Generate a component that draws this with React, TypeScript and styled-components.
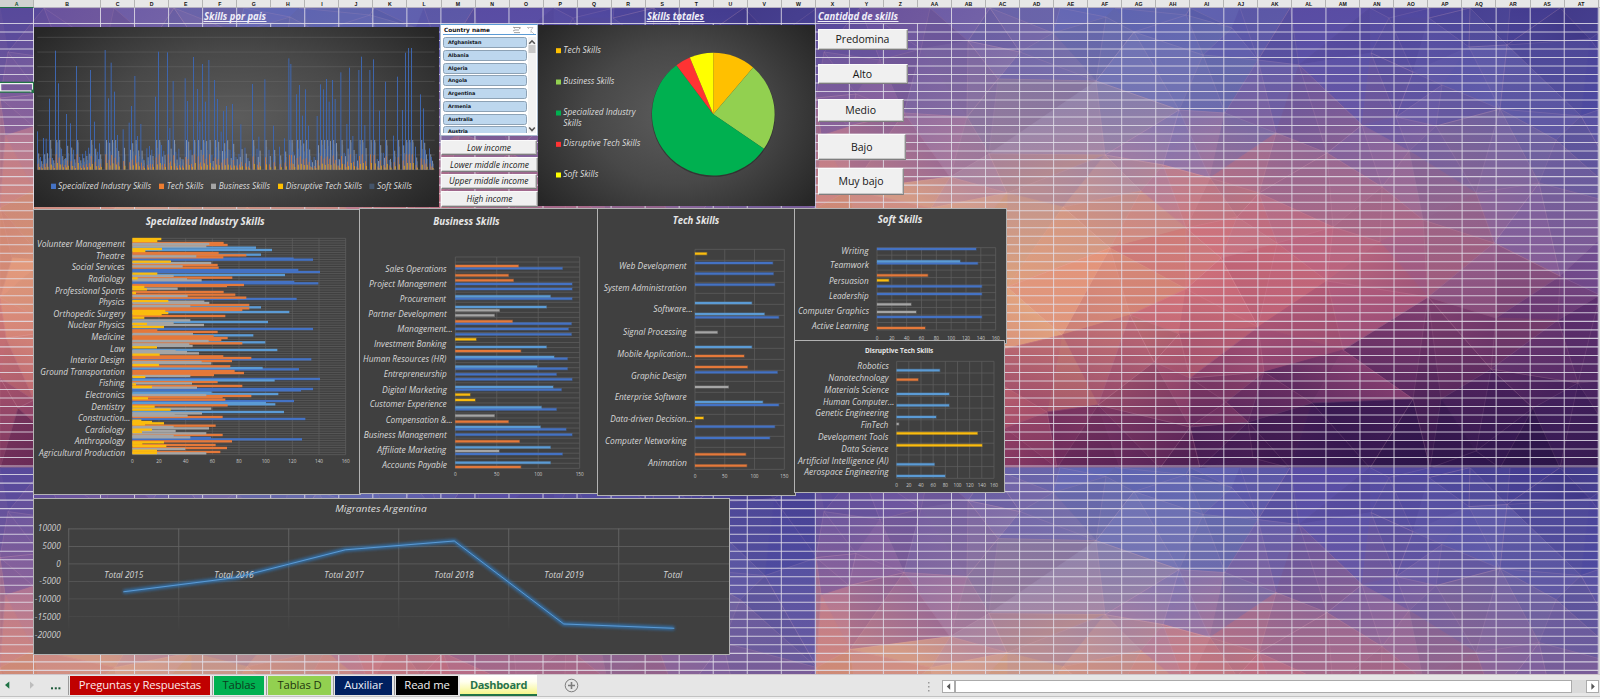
import React from "react";
import styled, { createGlobalStyle, css } from "styled-components";

const GlobalStyle = createGlobalStyle`
  * { box-sizing: border-box; }
  html, body { margin: 0; padding: 0; }
  body { font-family: "Open Sans", "Noto Sans", sans-serif; overflow: hidden; }
`;

/* ---------- sheet metrics ---------- */

const W = 1600;
const H = 699;
const SHEET_H = 666;
const COL = 34.04;
const ROW = 8.513;
const FIRST_ROW = 15.4;
const TILE_W = 816;
const TILE_H = 459.6;

const COLUMN_NAMES = "A B C D E F G H I J K L M N O P Q R S T U V W X Y Z AA AB AC AD AE AF AG AH AI AJ AK AL AM AN AO AP AQ AR AS AT".split(" ");

/* ---------- low-poly wallpaper ---------- */

type Pt = [number, number];

const MESH: Pt[] = [
  [0, 0], [44, 0], [114, 0], [174, 0], [244, 0], [299, 0], [374, 0], [424, 0], [474, 0], [554, 0], [614, 0], [654, 0], [694, 0], [744, 0], [817, 0],
  [8, 44], [5, 127], [33, 118], [40, 86], [64, 52],
  [105, 41], [152, 33], [204, 44], [237, 25], [290, 9], [318, 24], [370, 7], [387, 47], [416, 20], [442, 52], [483, 57], [555, 45],
  [573, 10], [613, 10], [597, 64], [653, 39], [691, 37], [774, 31], [626, 77], [182, 71], [280, 73], [363, 102], [409, 105],
  [460, 125], [546, 117], [580, 109], [620, 118], [684, 101], [765, 108], [740, 132], [88, 105], [151, 109], [134, 169], [173, 146],
  [289, 147], [347, 157], [511, 145], [593, 143], [394, 170], [443, 185], [566, 179], [660, 185], [723, 175], [115, 200], [191, 185],
  [247, 199], [325, 183], [370, 220], [421, 209], [517, 219], [607, 212], [564, 234], [461, 235], [678, 235], [294, 240], [405, 250],
  [744, 268], [784, 287], [370, 281], [511, 273], [612, 289], [680, 310], [742, 312], [314, 307], [191, 279], [246, 327], [363, 326],
  [442, 319], [527, 342], [338, 354], [374, 370], [448, 364], [675, 361], [762, 375], [231, 404], [282, 397], [410, 394], [496, 395],
  [597, 391], [625, 391], [717, 400], [432, 414], [374, 419], [660, 443], [437, 450], [189, 420],
  [34, 182], [44, 252], [124, 262], [64, 322], [144, 352], [34, 392], [114, 422], [12, 250], [6, 330], [18, 400],
  [0, 90], [0, 200], [0, 290], [0, 370], [817, 90], [817, 200], [817, 290], [817, 370],
  [0, 460], [84, 460], [144, 460], [241, 460], [304, 460], [344, 460], [384, 460], [474, 460], [554, 460], [614, 460], [684, 460], [744, 460], [817, 460],
];

const SHADE_X = [0, 84, 184, 284, 384, 484, 584, 684, 784];
const SHADE_Y = [0, 52, 102, 152, 202, 252, 302, 352, 402, 460];
const SHADES = [
  "5a4ba0 68509c 6a62a8 5f66b2 5b5fae 57499e 50479d 453f93 3a2f7c",
  "6a56a0 725a9c 7a66a4 7272ae 6a70b2 5a50a4 5850a2 5c58a6 4b4598",
  "85609a 86609a 9080a4 8880ac 6f6eb0 70589e 6a58a4 6660a8 4c4a9e",
  "c07a84 a87094 a8829e a888a2 a0749a 98668e 8a6698 7a68a0 64589f",
  "d08678 d89c84 c8988e d09888 c47880 b06a84 a46a8c 8a6494 6a5a9e",
  "dc9478 e0a07c e2a67e e09078 d4747a c4647a b46480 94608e 7a5494",
  "d88878 dc9a7c e2a680 d88c78 c86a76 b85c78 8c4674 7a406f 5c3070",
  "b86070 c87870 d08074 b06070 a04e6c 8c4270 7a386a 5e2c64 552c68",
  "8c4068 9a4a68 a85068 803864 6a2c60 4a2058 401c55 3a1a54 42205c",
  "5a2050 6a2a58 7c2f5c 5a2256 421a50 34164c 2a1448 2a1448 30184c",
].map((row) => row.split(" ").map((h) => [0, 2, 4].map((i) => parseInt(h.slice(i, i + 2), 16))));

function locate(axis: number[], v: number): [number, number] {
  for (let i = 0; i < axis.length - 1; i++) {
    if (v <= axis[i + 1]) return [i, Math.max(0, (v - axis[i]) / (axis[i + 1] - axis[i]))];
  }
  return [axis.length - 2, 1];
}

function shadeAt(x: number, y: number, gain: number) {
  const [i, u] = locate(SHADE_X, x);
  const [j, v] = locate(SHADE_Y, y);
  const mix = [0, 1, 2].map((k) => {
    const top = SHADES[j][i][k] * (1 - u) + SHADES[j][i + 1][k] * u;
    const bottom = SHADES[j + 1][i][k] * (1 - u) + SHADES[j + 1][i + 1][k] * u;
    return Math.min(255, Math.round((top * (1 - v) + bottom * v) * gain));
  });
  return `rgb(${mix.join(",")})`;
}

/* Bowyer-Watson triangulation */
function triangulate(source: Pt[]) {
  const pts: Pt[] = [...source, [-4000, -3000], [5000, -3000], [400, 7000]];
  const n = source.length;
  const circle = (t: number[]) => {
    const [[ax, ay], [bx, by], [cx, cy]] = t.map((i) => pts[i]);
    const d = 2 * (ax * (by - cy) + bx * (cy - ay) + cx * (ay - by)) || 1e-9;
    const a = ax * ax + ay * ay, b = bx * bx + by * by, c = cx * cx + cy * cy;
    const ux = (a * (by - cy) + b * (cy - ay) + c * (ay - by)) / d;
    const uy = (a * (cx - bx) + b * (ax - cx) + c * (bx - ax)) / d;
    return { t, x: ux, y: uy, r: (ax - ux) ** 2 + (ay - uy) ** 2 };
  };
  let tris = [circle([n, n + 1, n + 2])];
  for (let p = 0; p < n; p++) {
    const [x, y] = pts[p];
    const edges = new Map<string, number[]>();
    tris = tris.filter((c) => {
      if ((c.x - x) ** 2 + (c.y - y) ** 2 >= c.r) return true;
      for (const [a, b] of [[c.t[0], c.t[1]], [c.t[1], c.t[2]], [c.t[2], c.t[0]]]) {
        const key = a < b ? `${a}-${b}` : `${b}-${a}`;
        if (edges.has(key)) edges.delete(key);
        else edges.set(key, [a, b]);
      }
      return false;
    });
    edges.forEach(([a, b]) => tris.push(circle([a, b, p])));
  }
  return tris.filter((c) => c.t.every((i) => i < n)).map((c) => c.t.map((i) => pts[i]));
}

/* each facet runs from the shade at its upper corner to the shade at its lower one */
const FACETS = triangulate(MESH).map((t, i) => {
  const cx = (t[0][0] + t[1][0] + t[2][0]) / 3;
  const cy = (t[0][1] + t[1][1] + t[2][1]) / 3;
  const r1 = ((i * 37) % 17) / 17 - 0.5;
  const r2 = ((i * 53) % 23) / 23 - 0.5;
  const sorted = [...t].sort((a, b) => a[1] - b[1]);
  const [hi, lo] = [sorted[0], sorted[2]];
  const gain = 1 + r1 * 0.06;
  const dx = r1 * 22;
  const dy = r2 * 26;
  const toward = (p: Pt): Pt => [cx + (p[0] - cx) * 0.55 + dx, cy + (p[1] - cy) * 0.55 + dy];
  const a = toward(hi);
  const b = toward(lo);
  return {
    d: `M${t.map((p) => p.join(" ")).join("L")}Z`,
    hi, lo,
    from: shadeAt(a[0], a[1], gain),
    to: shadeAt(b[0], b[1], gain),
  };
});

const Wallpaper = styled.svg`
  display: block;
  width: ${W}px;
  height: ${SHEET_H}px;
`;

const COL_LINES = [33.5, ...Array.from({ length: 45 }, (_, i) => 100.5 + i * COL)];
const ROW_LINES = Array.from({ length: 77 }, (_, i) => FIRST_ROW + i * ROW);
/* first-row borders covered by headings that run past their own cell */
const OVERFLOWED = [5, 18, 23, 24];

function SheetSurface() {
  return (
    <Wallpaper viewBox={`0 0 ${W} ${SHEET_H}`}>
      <defs>
        <clipPath id="tileClip"><rect width={TILE_W} height={TILE_H} /></clipPath>
        {FACETS.map((f, i) => (
          <linearGradient key={i} id={`f${i}`} gradientUnits="userSpaceOnUse" x1={f.hi[0]} y1={f.hi[1]} x2={f.lo[0]} y2={f.lo[1]}>
            <stop offset="0" stopColor={f.from} />
            <stop offset="1" stopColor={f.to} />
          </linearGradient>
        ))}
        <g id="tile" clipPath="url(#tileClip)">
          <rect width={TILE_W} height={TILE_H} fill="#8a608c" />
          {FACETS.map((f, i) => <path key={i} d={f.d} fill={`url(#f${i})`} stroke={`url(#f${i})`} strokeWidth={0.8} />)}
          {FACETS.map((f, i) => (i % 2 ? <path key={i} d={f.d} fill="none" stroke="#ffc8d0" strokeOpacity={0.13} strokeWidth={0.8} /> : null))}
        </g>
      </defs>
      {[0, TILE_W].map((x) => [0, TILE_H].map((y) => <use key={`${x}-${y}`} href="#tile" x={x} y={y} />))}
      <g stroke="#e2e0ea" strokeOpacity={0.84}>
        {ROW_LINES.map((y) => <line key={y} x1={0} x2={1598.5} y1={y} y2={y} strokeWidth={1.05} />)}
        {COL_LINES.map((x, i) => (
          <line key={x} x1={x} x2={x} y1={OVERFLOWED.includes(i - 1) ? FIRST_ROW : 0} y2={SHEET_H} strokeWidth={1} />
        ))}
      </g>
      <rect x={1598.7} width={2} height={SHEET_H} fill="#d8d8d8" />
      <rect x={0.6} y={75.6} width={32} height={7.4} fill="none" stroke="#f0f5f1" strokeWidth={1.3} />
      <path d="M0 74.3H33.6V82.5M0 84.2H30.5" fill="none" stroke="#217346" strokeWidth={1.3} />
      <rect x={31.4} y={81.6} width={3} height={3.4} fill="#217346" />
    </Wallpaper>
  );
}

/* ---------- page frame ---------- */

const Workbook = styled.div`
  width: ${W}px;
  height: ${H}px;
  display: flex;
  flex-direction: column;
  overflow: hidden;
  background: #e6e6e6;
`;

const ColumnHeader = styled.div`
  display: flex;
  height: 8px;
  flex: none;
  background: #e7e7e7;
  border-bottom: 1px solid #b5b0c0;
`;

const HeaderCell = styled.div<{ $w: number; $active?: boolean }>`
  width: ${(p) => p.$w}px;
  flex: none;
  height: 8px;
  border-right: 1px solid #b4b4b4;
  font: 700 5.2px/8px "Liberation Sans", sans-serif;
  text-align: center;
  color: #111;
  ${(p) => p.$active && css`
    background: #d0d2d0;
    color: #174f30;
    border-bottom: 1px solid #217346;
  `}
`;

const Sheet = styled.div`
  position: relative;
  height: ${SHEET_H}px;
  flex: none;
  overflow: hidden;
`;

/* objects floating over the cells; coordinates are page coordinates */
const Floating = styled.div<{ $x: number; $y: number; $w: number; $h: number }>`
  position: absolute;
  left: ${(p) => p.$x}px;
  top: ${(p) => p.$y - 8}px;
  width: ${(p) => p.$w}px;
  height: ${(p) => p.$h}px;
`;

const Drawing = styled.svg`
  display: block;
  width: 100%;
  height: 100%;
  overflow: hidden;
  font-family: "Open Sans", "Noto Sans", sans-serif;
`;

const Panel = styled(Floating)`
  background: #404040;
  outline: 1px solid #b3b3b3;
  outline-offset: -0.5px;
`;

const GlowPanel = styled(Floating)`
  background: radial-gradient(ellipse 62% 75% at 50% 50%, #5c5c5c 0%, #484848 50%, #272727 100%);
`;

function SheetHeading({ x, w, children }: { x: number; w: number; children: string }) {
  return (
    <Floating $x={x} $y={9} $w={w + 4} $h={14}>
      <Drawing viewBox={`0 0 ${w + 4} 14`}>
        <text x={1} y={11} fontSize={10} fontWeight={700} fontStyle="italic" fill="#f0eef8" textLength={w} lengthAdjust="spacingAndGlyphs">{children}</text>
        <rect x={0.5} y={12} width={w + 1} height={1} fill="#f0eef8" />
      </Drawing>
    </Floating>
  );
}

/* ---------- bar charts ---------- */

const SERIES: Record<string, string> = { b: "#4472c4", l: "#5b9bd5", o: "#e5793a", g: "#a5a5a5", y: "#fbbc0e" };

type Label = [text: string, x1: number, y: number, x2: number];

interface BarChartProps {
  box: [number, number, number, number];
  view: [number, number];
  title: [string, number, number, number];
  plainTitle?: boolean;
  plot: [number, number, number, number];
  rows: number;
  columns: number;
  step: number;
  tickY: number;
  labels: Label[];
  bars: string;
  thick: number;
  haloed?: boolean;
}

/* chart drawings use three units per pixel */
function BarChart(p: BarChartProps) {
  const [x0, y0, x1, y1] = p.plot;
  const bars = p.bars.trim().split(/\s+/).map((s) => {
    const m = s.match(/^(\d+)([a-z])(\d+)$/)!;
    return { y: +m[1], c: SERIES[m[2]], x: +m[3] };
  }).sort((a, b) => b.x - a.x);
  return (
    <Panel $x={p.box[0]} $y={p.box[1]} $w={p.box[2]} $h={p.box[3]}>
      <Drawing viewBox={`${p.view[0]} ${p.view[1]} ${p.box[2] * 3} ${p.box[3] * 3}`}>
        <g stroke="#5e5e5e" strokeWidth={2.2}>
          {Array.from({ length: p.rows + 1 }, (_, i) => {
            const y = y0 + ((y1 - y0) * i) / p.rows;
            return <line key={i} x1={x0} x2={x1} y1={y} y2={y} />;
          })}
          {Array.from({ length: p.columns + 1 }, (_, i) => {
            const x = x0 + ((x1 - x0) * i) / p.columns;
            return <line key={i} x1={x} x2={x} y1={y0} y2={y1} />;
          })}
        </g>
        {bars.map((b, i) => (
          <g key={i}>
            {p.haloed && <rect x={x0 - 1} y={b.y - p.thick / 2 - 2} width={b.x - x0 + 3} height={p.thick + 4} fill={b.c} opacity={0.35} />}
            <rect x={x0} y={b.y - p.thick / 2} width={b.x - x0} height={p.thick} fill={b.c} />
          </g>
        ))}
        {p.labels.map(([t, lx, ly, rx]) => (
          <text key={t} x={lx} y={ly + 8} fontSize={25} fontStyle="italic" fill="#d8d8d8" textLength={rx - lx} lengthAdjust="spacingAndGlyphs">{t}</text>
        ))}
        {Array.from({ length: p.columns + 1 }, (_, i) => (
          <text key={i} x={x0 + ((x1 - x0) * i) / p.columns} y={p.tickY + 5} fontSize={14} textAnchor="middle" fill="#cfcfcf">{i * p.step}</text>
        ))}
        <text x={p.title[1]} y={p.title[2] + 9.5} fontSize={p.plainTitle ? 21 : 29} fontWeight={700} fontStyle={p.plainTitle ? "normal" : "italic"} fill="#e6e6e6" textLength={p.title[3] - p.title[1]} lengthAdjust="spacingAndGlyphs">{p.title[0]}</text>
      </Drawing>
    </Panel>
  );
}

const SPECIALIZED = `102y393 108y381 114o580 117g537 120o592 124g528 128l677 132y395 135l725 138y345 144o565 149l692 151o648 154g498 157o579 161b790 164b848
170y422 174g543 180o562 184g457 188o565 195b804 201b869 206y381 210l764 213g430 218o606 220y322 223g470 226g514 231b792 235b864 240o641 243o590 246y342 251g442 253y350
261o580 264y317 269o615 273g472 278o648 282b799 288y414 290g522 294g537 300o657 303g480 307l692 310o657 315o636 318y405 321l777 324y414 328y394 333o585 338y342 346g480 351l713
354g430 357y350 360g521 366y401 372b848 376o381 381o562 387g488 391l669 394o550 399o592 405o573 408g535 412l705 415o636 418g477 423g487 427y380 435l741 438g436 441g470 445g506 449y388
454o579 459o663 463b843 468o605 471g514 475g543 480y386 484o600 489l697 493b806 498o613 504o641 510o551 513g480 516y345 522b869 526l733 531o562 535g485 538y317 543o636 546y365 548g500 552b848 556b812
563l544 567l744 570g528 573o663 577o577 580y353 584o585 588b791 594l707 598l735 601o592 605y373 611g543 614y421 621l761 625g515 629g433 632g472 636o577 642b825 647y333 651y365 655y401 658y344
662o556 666g430 670g536 674y365 678g436 681y335 685g528 690o577 693g430 697g480 699b542 703b815 709o605 712y401 716y336 720o556 723y408 729o590 732g465 737y380 741o570 745g528 744y380`;

const CHARTS: BarChartProps[] = [
  {
    box: [33.5, 210, 326, 284], view: [11, 15], title: ["Specialized Industry Skills", 346, 49, 703],
    plot: [306, 100, 946, 749], rows: 92, columns: 8, step: 20, tickY: 768, thick: 7, bars: SPECIALIZED,
    labels: [
      ["Volunteer Management", 20, 118, 284], ["Theatre", 197, 153, 283], ["Social Services", 124, 187, 283], ["Radiology", 173, 222, 283],
      ["Professional Sports", 74, 258, 283], ["Physics", 205, 292, 283], ["Orthopedic Surgery", 69, 327, 284], ["Nuclear Physics", 112, 362, 283],
      ["Medicine", 183, 396, 283], ["Law", 239, 432, 283], ["Interior Design", 120, 467, 283], ["Ground Transportation", 30, 501, 283],
      ["Fishing", 206, 536, 283], ["Electronics", 165, 572, 283], ["Dentistry", 183, 606, 283], ["Construction...", 143, 641, 300],
      ["Cardiology", 164, 675, 283], ["Anthropology", 133, 710, 283], ["Agricultural Production", 26, 745, 284],
    ],
  },
  {
    box: [359.7, 209.3, 239, 283.7], view: [14, 13], title: ["Business Skills", 234, 52, 433],
    plot: [300, 157, 673, 791], rows: 42, columns: 3, step: 50, tickY: 810, thick: 6, haloed: true,
    bars: `184o489 191b621 212o459 227o474 238b650 253b650 275l585 282b650 307l573 317g432 332g417 350o471 357b648 373b639 389b648 404y362
    427l573 439o496 457l596 462b636 486l545 492b636 509b603 524b650 547l593 555b618 570y344 586y359 608l558 614b603 633g417 651o459 667l555 674b632
    690b650 710o492 728l585 739g431 748b621 774l585 787o496`,
    labels: [
      ["Sales Operations", 90, 193, 274], ["Project Management", 41, 240, 274], ["Procurement", 133, 284, 272], ["Partner Development", 39, 329, 274],
      ["Management...", 126, 375, 292], ["Investment Banking", 56, 419, 273], ["Human Resources (HR)", 23, 465, 273], ["Entrepreneurship", 85, 510, 274],
      ["Digital Marketing", 80, 556, 275], ["Customer Experience", 43, 600, 274], ["Compensation &...", 91, 646, 292], ["Business Management", 25, 692, 274],
      ["Affiliate Marketing", 66, 736, 273], ["Accounts Payable", 81, 781, 275],
    ],
  },
  {
    box: [598.4, 209, 196.4, 286], view: [25, 12], title: ["Tech Skills", 249, 47, 389],
    plot: [316, 133, 584, 793], rows: 20, columns: 3, step: 50, tickY: 813, thick: 6, haloed: true,
    bars: `146y351 174b549 206b551 239b555 294l486 327l524 337b567 382g383 426l486 453o463 486o473 502b563 546g416 591l519 600b567 639y341 665b555
    699b540 748o468 782o471`,
    labels: [
      ["Web Development", 88, 184, 291], ["System Administration", 42, 250, 291], ["Software...", 191, 314, 309], ["Signal Processing", 100, 381, 291],
      ["Mobile Application...", 83, 447, 307], ["Graphic Design", 124, 514, 291], ["Enterprise Software", 75, 577, 291], ["Data-driven Decision...", 62, 643, 309],
      ["Computer Networking", 46, 710, 291], ["Animation", 176, 776, 292],
    ],
  },
  {
    box: [795, 208.7, 211, 134.3], view: [15, 11], title: ["Soft Skills", 263, 44, 397],
    plot: [261, 127, 617, 374], rows: 11, columns: 8, step: 20, tickY: 398, thick: 6, haloed: true,
    bars: "131b558 168l510 174b563 210o413 225y296 243b575 266b575 297g363 320g378 335b575 368o405",
    labels: [
      ["Writing", 154, 138, 236], ["Teamwork", 120, 181, 237], ["Persuasion", 117, 227, 236], ["Leadership", 117, 273, 236],
      ["Computer Graphics", 24, 319, 237], ["Active Learning", 66, 363, 236],
    ],
  },
  {
    box: [795, 341.3, 209.2, 150.7], view: [15, 409], title: ["Disruptive Tech Skills", 225, 436, 430], plainTitle: true,
    plot: [320, 470, 612, 821], rows: 10, columns: 8, step: 20, tickY: 841, thick: 6, haloed: true,
    bars: "497l449 525o384 568l477 602l477 637l438 658g326 686y562 722y576 779l433 814l465",
    labels: [
      ["Robotics", 202, 485, 297], ["Nanotechnology", 115, 522, 296], ["Materials Science", 103, 557, 297], ["Human Computer...", 99, 593, 313],
      ["Genetic Engineering", 76, 627, 296], ["FinTech", 212, 661, 295], ["Development Tools", 84, 697, 295], ["Data Science", 154, 733, 295],
      ["Artificial Intelligence (AI)", 24, 769, 296], ["Aerospace Engineering", 43, 803, 296],
    ],
  },
];

/* ---------- skills by country ---------- */

const PEAKS = `112:394 130:414 138:416 148:296 166:152 175:250 199:342 211:370 229:198 271:210 283:365 298:430 315:150 325:295 333:188 343:275 352:405 369:388
387:368 394:318 404:228 412:408 422:372 440:445 448:438 466:290 475:155 484:435 502:157 509:384 519:243 555:235 562:303 580:171 592:267 599:365 607:192 616:305
626:180 643:240 652:297 663:395 670:333 679:318 697:312 722:373 757:252 776:410 794:238 820:377 838:440 853:415 866:175 872:192 889:283 898:255 907:347
916:268 925:377 951:348 961:253 970:268 979:237 987:305 997:240 1005:297 1022:217 1040:372 1048:203 1058:408 1076:210 1084:170 1094:375 1109:210 1120:178
1138:332 1156:245 1180:407 1192:230 1207:330 1216:158 1225:144 1234:144 1246:440 1261:283 1270:325 1288:445`.trim().split(/\s+/).map((s) => s.split(":").map(Number));

/* bars that have no listed peak stay near the axis */
const COUNTRIES = [
  ...PEAKS.map(([x, top]) => ({ x, top })),
  ...Array.from({ length: 132 }, (_, i) => ({ x: 112 + i * 9.02, top: 480 - (((i * 29) % 13) / 13) * 40 }))
    .filter((c) => PEAKS.every(([px]) => Math.abs(px - c.x) > 5.5)),
].map((c, i) => {
  const noise = ((i * 29) % 13) / 13;
  const total = 509 - c.top;
  return {
    ...c,
    tech: Math.min(46, 4 + total * 0.12 + noise * 8),
    business: Math.min(89, 12 + total * 0.32 + noise * 16),
    disruptive: Math.min(20, 2 + total * 0.05 + noise * 4),
    soft: Math.min(82, 8 + total * 0.22 + noise * 12),
  };
});

const COUNTRY_LEGEND: [string, string, number, number, number][] = [
  ["Specialized Industry Skills", "#4472c4", 153, 174, 453], ["Tech Skills", "#ed7d31", 477, 500, 611], ["Business Skills", "#a5a5a5", 633, 656, 810],
  ["Disruptive Tech Skills", "#ffc000", 834, 857, 1086], ["Soft Skills", "#44546a", 1108, 1131, 1236],
];

function CountryChart() {
  return (
    <GlowPanel $x={34} $y={27} $w={404.7} $h={180}>
      <Drawing viewBox="102 81 1214 540">
        {Array.from({ length: 10 }, (_, i) => (
          <line key={i} x1={112} x2={1304} y1={112 + i * 44.1} y2={112 + i * 44.1} stroke="#747474" strokeOpacity={0.55} strokeWidth={2} />
        ))}
        {COUNTRIES.map((c) => (
          <g key={c.x}>
            <rect x={c.x - 1} y={c.top} width={3} height={509 - c.top} fill="#3f66ae" />
            <rect x={c.x + 5.4} y={509 - c.soft} width={2} height={c.soft} fill="#4c6690" />
            <rect x={c.x + 3} y={509 - c.business} width={2.4} height={c.business} fill="#92a2bc" />
            <rect x={c.x + 1.2} y={509 - c.tech} width={2.3} height={c.tech} fill="#d9752f" />
            <rect x={c.x + 4.6} y={509 - c.disruptive} width={2.4} height={c.disruptive} fill="#e0a81e" />
          </g>
        ))}
        {COUNTRY_LEGEND.map(([t, c, sx, x1, x2]) => (
          <g key={t}>
            <rect x={sx} y={551} width={15} height={16} fill={c} />
            <text x={x1} y={567} fontSize={25} fontStyle="italic" fill="#dadada" textLength={x2 - x1} lengthAdjust="spacingAndGlyphs">{t}</text>
          </g>
        ))}
      </Drawing>
    </GlowPanel>
  );
}

/* ---------- totals pie ---------- */

const SLICES: [string, number, number][] = [
  ["#ffc000", 0, 40.5], ["#92d050", 40.5, 124.4], ["#00b050", 124.4, 323], ["#ff3333", 323, 337.5], ["#ffff00", 337.5, 360],
];

const PIE_LEGEND: [string, string, number, number][] = [
  ["Tech Skills", "#ffc000", 150, 513], ["Business Skills", "#92d050", 244, 553], ["Specialized Industry", "#00b050", 337, 617],
  ["Disruptive Tech Skills", "#ff3333", 431, 631], ["Soft Skills", "#ffff00", 523, 505],
];

function slicePath(from: number, to: number) {
  const at = (deg: number) => {
    const a = (deg * Math.PI) / 180;
    return `${850 + 184 * Math.sin(a)} ${341 - 184 * Math.cos(a)}`;
  };
  return `M850 341L${at(from)}A184 184 0 ${to - from > 180 ? 1 : 0} 1 ${at(to)}Z`;
}

function PieChart() {
  return (
    <GlowPanel $x={538} $y={24.5} $w={277.3} $h={181.7}>
      <Drawing viewBox="324 73.5 832 545">
        <circle cx={850} cy={343.5} r={185.5} fill="#222" opacity={0.55} />
        {SLICES.map(([c, a, b]) => <path key={c} d={slicePath(a, b)} fill={c} />)}
        {PIE_LEGEND.map(([t, c, y, x2]) => (
          <g key={t}>
            <rect x={378} y={y - 7} width={15} height={15} fill={c} />
            <text x={400} y={y + 6.5} fontSize={25} fontStyle="italic" fill="#dcdcdc" textLength={x2 - 400} lengthAdjust="spacingAndGlyphs">{t}</text>
          </g>
        ))}
        <text x={400} y={376.5} fontSize={25} fontStyle="italic" fill="#dcdcdc" textLength={55} lengthAdjust="spacingAndGlyphs">Skills</text>
      </Drawing>
    </GlowPanel>
  );
}

/* ---------- slicer ---------- */

const SlicerBox = styled(Floating)`
  background: #fff;
  border: 1px solid #a8b8cc;
  border-top-color: #5b9bd5;
  padding: 1px 1px 2px 2px;
  display: flex;
  flex-direction: column;
  overflow: hidden;
`;

const SlicerHeader = styled.div`
  height: 9px;
  flex: none;
  display: flex;
  align-items: center;
  border-bottom: 1px solid #5b9bd5;
  padding-left: 1px;
  font: 700 5.8px/9px "DejaVu Sans", sans-serif;
  color: #111;
  svg { display: block; margin-left: auto; }
`;

const SlicerBody = styled.div`
  flex: 1;
  min-height: 0;
  display: flex;
  justify-content: space-between;
  padding-top: 2px;
`;

const SlicerList = styled.div`
  width: 84px;
  display: flex;
  flex-direction: column;
  gap: 1.75px;
  overflow: hidden;
`;

const SlicerItem = styled.div`
  flex: none;
  height: 11px;
  padding-left: 4px;
  border: 1px solid #8da2b5;
  border-radius: 2.5px;
  background: #bdd7ee;
  font: 700 4.9px/9.5px "DejaVu Sans", sans-serif;
  color: #10151a;
`;

const SlicerTrack = styled.div`
  width: 8px;
  background: #f3f3f3;
  svg { display: block; }
`;

const Names = ["Afghanistan", "Albania", "Algeria", "Angola", "Argentina", "Armenia", "Australia", "Austria"];

function Slicer() {
  return (
    <SlicerBox $x={440} $y={24} $w={98} $h={112}>
      <SlicerHeader>
        Country name
        <svg width="24" height="8" viewBox="0 0 24 8" fill="none" stroke="#8a8a8a" strokeWidth="0.8">
          <path d="M2 1.5h6M3 4h4M2 6.6h6M1 1l2 1.4M1 5l2 -1M9 1.5L7 3" />
          <path d="M16 1.5h5l-2 2.5v3M19 5l3 3M15 1l2 2" stroke="#b9b9b9" />
        </svg>
      </SlicerHeader>
      <SlicerBody>
        <SlicerList>{Names.map((n) => <SlicerItem key={n}>{n}</SlicerItem>)}</SlicerList>
        <SlicerTrack>
          <svg width="8" height="97" viewBox="0 0 8 97">
            <path d="M1.2 6.8L4 3.8L6.8 6.8" fill="none" stroke="#555" strokeWidth="1.6" />
            <rect x="0.5" y="8" width="7" height="8" fill="#c9c9c9" />
            <path d="M1.2 90.5L4 93.5L6.8 90.5" fill="none" stroke="#555" strokeWidth="1.6" />
          </svg>
        </SlicerTrack>
      </SlicerBody>
    </SlicerBox>
  );
}

/* ---------- form buttons ---------- */

const FormButton = styled(Floating)<{ $italic?: boolean }>`
  display: flex;
  align-items: center;
  justify-content: center;
  background: #f0f0f0;
  border: 1px solid #fbfbfb;
  border-right-color: #8e8e8e;
  border-bottom: 1px solid #7e7e7e;
  box-shadow: inset -1px -1px 0 #c8c8c8;
  color: #161616;
  white-space: nowrap;
  font-size: ${(p) => (p.$italic ? 8.4 : 10.5)}px;
  font-style: ${(p) => (p.$italic ? "italic" : "normal")};
  line-height: 1;
`;

const BUTTONS: [string, number, number, number, number, boolean][] = [
  ["Low income", 441, 140.4, 96, 15, true], ["Lower middle income", 441, 157.4, 97, 14.8, true],
  ["Upper middle income", 441, 174, 95.6, 15, true], ["High income", 441, 190.8, 97, 16, true],
  ["Predomina", 817.5, 29, 90, 20.5, false], ["Alto", 817.5, 64, 90, 19.5, false], ["Medio", 817.5, 99, 86.3, 23, false],
  ["Bajo", 818, 134, 87.6, 26, false], ["Muy bajo", 818, 168, 86, 26.5, false],
];

/* ---------- migration line chart ---------- */

const YEARS: [string, number, number][] = [
  ["Total 2015", 104, 143], ["Total 2016", 214, 253.5], ["Total 2017", 324, 363.5], ["Total 2018", 434, 473.5], ["Total 2019", 544, 583.5], ["Total", 663, 682],
];

const MIGRATION = "M123 591.3L236 577L345 549.3L454 540.5L563.5 623.5L674 627.8";

function MigrationChart() {
  return (
    <Panel $x={33.7} $y={498.5} $w={695.8} $h={155.8}>
      <Drawing viewBox="33.7 498.5 695.8 155.8">
        <defs>
          <linearGradient id="fade" gradientUnits="userSpaceOnUse" x1="0" y1="528" x2="0" y2="632">
            <stop offset="0" stopColor="#676767" /><stop offset="0.6" stopColor="#565656" /><stop offset="1" stopColor="#404040" />
          </linearGradient>
          <filter id="halo" filterUnits="userSpaceOnUse" x="100" y="520" width="600" height="130"><feGaussianBlur stdDeviation="1.8" /></filter>
        </defs>
        {[0, 1, 2, 3, 4, 5].map((i) => (
          <g key={i} fill="url(#fade)">
            <rect x={68} y={528 + i * 17.5} width={661} height={0.8} />
            <rect x={68 + i * 110} y={528} width={0.9} height={104} />
          </g>
        ))}
        {[10000, 5000, 0, -5000, -10000, -15000, -20000].map((v, i) => (
          <text key={v} x={60.5} y={531 + i * 17.67} fontSize={8.3} fontStyle="italic" textAnchor="end" fill="#d0d0d0" textLength={[23, 18.5, 4.5, 21.5, 26, 26, 26][i]} lengthAdjust="spacingAndGlyphs">{v}</text>
        ))}
        <path d={MIGRATION} fill="none" stroke="#2f7ac0" strokeWidth={4} filter="url(#halo)" opacity={0.8} />
        {YEARS.map(([t, a, b]) => (
          <text key={t} x={a} y={578} fontSize={8.3} fontStyle="italic" fill="#d6d6d6" textLength={b - a} lengthAdjust="spacingAndGlyphs">{t}</text>
        ))}
        <path d={MIGRATION} fill="none" stroke="#5b9bd5" strokeWidth={1} strokeLinejoin="round" />
        <text x={335} y={512} fontSize={9.6} fontStyle="italic" fill="#dedede" textLength={91.5} lengthAdjust="spacingAndGlyphs">Migrantes Argentina</text>
      </Drawing>
    </Panel>
  );
}

/* ---------- sheet tabs and scroll bar ---------- */

const TabBar = styled.div`
  flex: none;
  height: 25px;
  display: flex;
  align-items: flex-start;
  background: #e6e6e6;
  border-top: 1px solid #cfc6cb;
  border-bottom: 2px solid #f0f0f0;
  box-shadow: inset 0 -1px 0 #c2c2c2;
`;

const TabNav = styled.div`
  width: 68px;
  height: 22px;
  flex: none;
  svg { display: block; }
`;

const Tab = styled.div<{ $w: number; $bg: string; $fg: string }>`
  width: ${(p) => p.$w}px;
  height: 19px;
  margin: 1px 2px 0 0;
  flex: none;
  border-left: 1px solid #9a9a9a;
  padding-left: 1px;
  span {
    display: block;
    height: 19px;
    background: ${(p) => p.$bg};
    color: ${(p) => p.$fg};
    text-align: center;
    font-size: 11.3px;
    line-height: 18px;
    white-space: nowrap;
    letter-spacing: -0.12px;
  }
`;

const ActiveTab = styled.div`
  width: 77px;
  height: 20.5px;
  flex: none;
  background: linear-gradient(#ffffff 0%, #fffff0 35%, #f6f68a 100%);
  border-bottom: 2px solid #217346;
  color: #27734a;
  font-weight: 700;
  font-size: 11px;
  line-height: 20px;
  letter-spacing: -0.3px;
  text-align: center;
`;

const AddSheet = styled.svg`
  display: block;
  margin: 3px 0 0 27px;
  flex: none;
`;

const ScrollArea = styled.div`
  margin: 5px 1px 0 auto;
  display: flex;
  height: 13px;
  width: 673px;
`;

const Grip = styled.svg`
  display: block;
  width: 16px;
  flex: none;
`;

const ScrollButton = styled.div`
  width: 13px;
  height: 13px;
  flex: none;
  background: #fff;
  border: 1px solid #ababab;
  svg { display: block; }
`;

const ScrollThumb = styled.div`
  flex: 1;
  background: #fff;
  border: 1px solid #ababab;
`;

const ScrollTrack = styled.div`
  width: 14px;
  background: #dadada;
`;

const TABS: [string, number, string, string][] = [
  ["Preguntas y Respuestas", 142, "#c00000", "#fbeaea"], ["Tablas", 52, "#00b050", "#0c3a1e"], ["Tablas D", 65, "#92d050", "#22340f"],
  ["Auxiliar", 59, "#002060", "#eef1f8"], ["Read me", 64, "#000000", "#f2f2f2"],
];

export default function App() {
  return (
    <>
      <GlobalStyle />
      <Workbook>
        <ColumnHeader>
          {COLUMN_NAMES.map((c, i) => <HeaderCell key={c} $w={i === 0 ? 34 : i === 1 ? 67.2 : COL} $active={i === 0}>{c}</HeaderCell>)}
        </ColumnHeader>
        <Sheet>
          <SheetSurface />
          <SheetHeading x={203} w={62}>Skills por pais</SheetHeading>
          <SheetHeading x={646} w={57}>Skills totales</SheetHeading>
          <SheetHeading x={816.5} w={80}>Cantidad de skills</SheetHeading>
          <CountryChart />
          <PieChart />
          <Slicer />
          {BUTTONS.map(([t, x, y, w, h, it]) => <FormButton key={t} $x={x} $y={y} $w={w} $h={h} $italic={it}>{t}</FormButton>)}
          {CHARTS.map((c) => <BarChart key={c.title[0]} {...c} />)}
          <MigrationChart />
        </Sheet>
        <TabBar>
          <TabNav>
            <svg width="68" height="22" viewBox="0 0 68 22">
              <path d="M9.3 6.5v7.2L5 10.1Z" fill="#217346" />
              <path d="M30 6.5v7.2L34 10.1Z" fill="#bdbdbd" />
              <g fill="#1d5a3a"><rect x="51" y="12.3" width="2" height="2" /><rect x="54.8" y="12.3" width="2" height="2" /><rect x="58.4" y="12.3" width="2" height="2" /></g>
            </svg>
          </TabNav>
          {TABS.map(([t, w, bg, fg]) => <Tab key={t} $w={w} $bg={bg} $fg={fg}><span>{t}</span></Tab>)}
          <ActiveTab>Dashboard</ActiveTab>
          <AddSheet width="15" height="15" viewBox="0 0 15 15" fill="none" stroke="#7d7d7d">
            <circle cx="7.5" cy="7.5" r="6.3" /><path d="M7.5 4v7M4 7.5h7" strokeWidth="1.6" />
          </AddSheet>
          <ScrollArea>
            <Grip viewBox="0 0 16 13" fill="#9a9a9a">
              <rect x="2" y="2" width="1.5" height="1.5" /><rect x="2" y="6" width="1.5" height="1.5" /><rect x="2" y="10" width="1.5" height="1.5" />
            </Grip>
            <ScrollButton><svg width="11" height="11" viewBox="0 0 11 11"><path d="M7.2 2.3v6.4L3.8 5.5Z" fill="#555" /></svg></ScrollButton>
            <ScrollThumb />
            <ScrollTrack />
            <ScrollButton><svg width="11" height="11" viewBox="0 0 11 11"><path d="M4.4 2.3v6.4L7.8 5.5Z" fill="#555" /></svg></ScrollButton>
          </ScrollArea>
        </TabBar>
      </Workbook>
    </>
  );
}
